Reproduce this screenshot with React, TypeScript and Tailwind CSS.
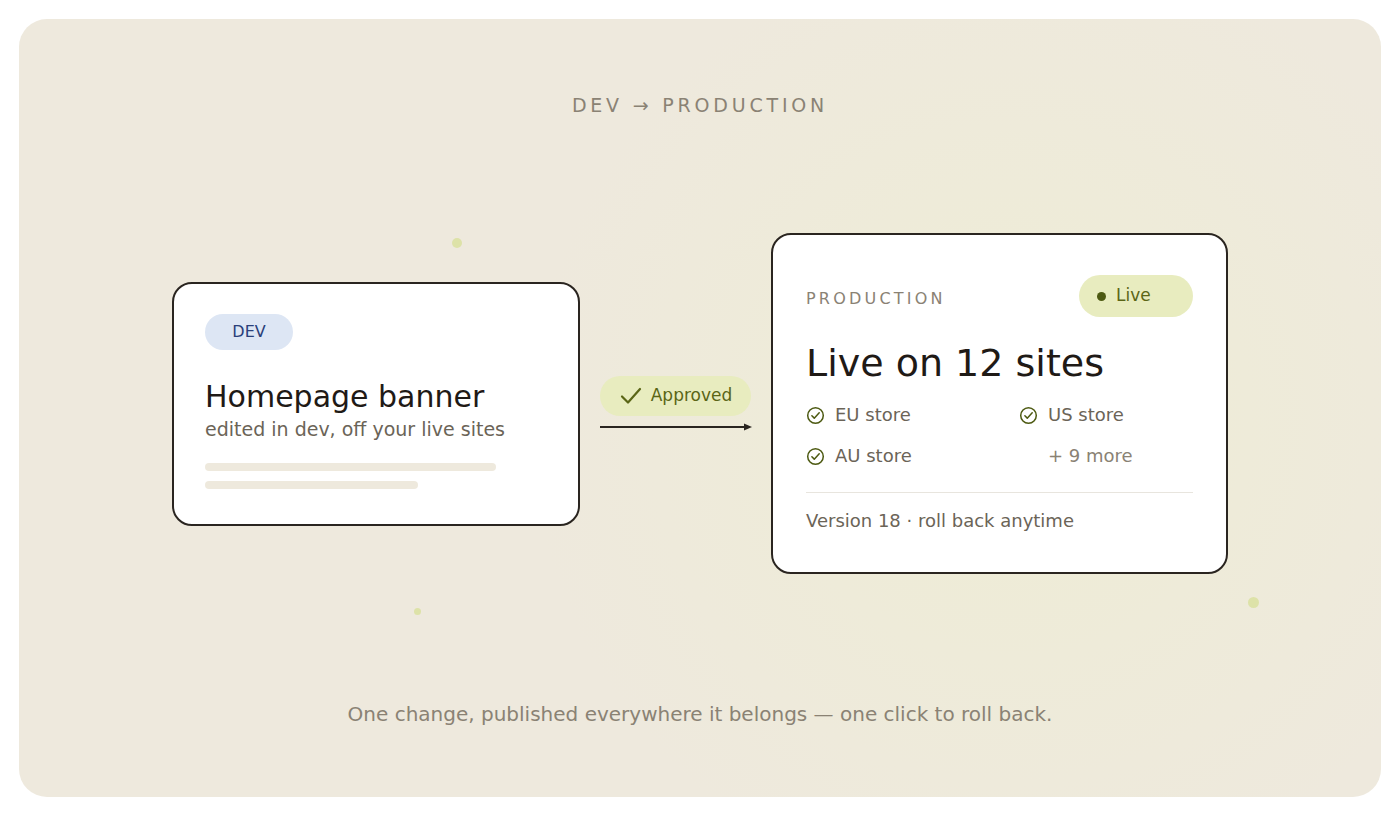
import React from 'react';

const Check = ({ className }: { className?: string }) => (
  <svg viewBox="0 0 20 20" className={className} fill="none" stroke="currentColor" strokeWidth="1.6" strokeLinecap="round" strokeLinejoin="round">
    <circle cx="10" cy="10" r="8.2" />
    <path d="M6.2 10.3l2.5 2.5 5.2-5.6" />
  </svg>
);

const stores = [
  { label: 'EU store', check: true },
  { label: 'US store', check: true },
  { label: 'AU store', check: true },
  { label: '+ 9 more', check: false },
];

export default function App() {
  return (
    <div className="w-[1400px] h-[817px] bg-white p-[19px]" style={{ fontFamily: '"DejaVu Sans", Verdana, sans-serif' }}>
      <div className="relative h-[778px] rounded-[28px] bg-[#eee9dd] bg-[radial-gradient(circle_at_73%_52%,#eeecd4_0%,#eeebd9_22%,#eee9dd_45%)] flex flex-col items-center overflow-hidden">
        {/* decorative dots */}
        <div className="absolute left-[433px] top-[219px] w-[10px] h-[10px] rounded-full bg-[#dde2a8]" />
        <div className="absolute left-[395px] top-[589px] w-[7px] h-[7px] rounded-full bg-[#dde2a8]" />
        <div className="absolute left-[1229px] top-[578px] w-[11px] h-[11px] rounded-full bg-[#dde2a8]" />

        <div className="mt-[74px] text-[19px] leading-6 tracking-[0.2em] text-[#8a8274]">DEV → PRODUCTION</div>

        <div className="flex-1 flex items-center pb-[12px]">
          {/* dev card */}
          <div className="w-[408px] h-[244px] bg-white border-2 border-[#2a2520] rounded-[20px] px-[31px] pt-[30px]">
            <div className="inline-flex items-center justify-center w-[88px] h-[36px] rounded-full bg-[#dde6f4] text-[#2a3f7a] text-[16px]">DEV</div>
            <div className="mt-[29px] text-[30px] leading-[36px] text-[#1f1a16]">Homepage banner</div>
            <div className="mt-[2px] text-[19px] leading-6 text-[#6b6457]">edited in dev, off your live sites</div>
            <div className="mt-[22px] w-[291px] h-[8px] rounded-full bg-[#eee9dd]" />
            <div className="mt-[10px] w-[213px] h-[8px] rounded-full bg-[#eee9dd]" />
          </div>

          {/* connector */}
          <div className="w-[191px] flex flex-col items-center">
            <div className="flex items-center gap-[8px] h-[40px] px-[19px] rounded-full bg-[#e8ecbf] text-[#5a6516] text-[17px]">
              <svg viewBox="0 0 24 24" className="w-[24px] h-[24px]" fill="none" stroke="currentColor" strokeWidth="2.2" strokeLinecap="round" strokeLinejoin="round">
                <path d="M3 12.5l6 6L21 5" />
              </svg>
              Approved
            </div>
            <svg width="154" height="10" viewBox="0 0 154 10" className="mt-[6px] ml-[2px]">
              <line x1="0" y1="5" x2="146" y2="5" stroke="#2a2520" strokeWidth="2" />
              <path d="M144 1.5L152 5L144 8.5Z" fill="#2a2520" />
            </svg>
          </div>

          {/* production card */}
          <div className="w-[457px] h-[341px] bg-white border-2 border-[#2a2520] rounded-[20px] px-[33px] pt-[46px]">
            <div className="flex items-center justify-between">
              <div className="text-[16px] tracking-[0.2em] text-[#8a8274]">PRODUCTION</div>
              <div className="-mt-[6px] flex items-center gap-[10px] w-[114px] h-[42px] pl-[18px] rounded-full bg-[#e8ecbf] text-[#5a6516] text-[17px]">
                <span className="w-[9px] h-[9px] rounded-full bg-[#4d5a12]" />
                Live
              </div>
            </div>
            <div className="mt-[24px] text-[38px] leading-[44px] text-[#1f1a16]">Live on 12 sites</div>
            <div className="mt-[18px] grid grid-cols-[213px_1fr] gap-y-[17px]">
              {stores.map((s) => (
                <div key={s.label} className="flex items-center gap-[10px] text-[18px] leading-6 text-[#6b6457]">
                  {s.check ? <Check className="w-[19px] h-[19px] text-[#4d5a12]" /> : <span className="w-[19px]" />}
                  <span className={s.check ? '' : 'text-[#8a8274]'}>{s.label}</span>
                </div>
              ))}
            </div>
            <div className="mt-[24px] h-px bg-[#e8e5de]" />
            <div className="mt-[16px] text-[18px] leading-6 text-[#6b6457]">Version 18 · roll back anytime</div>
          </div>
        </div>

        <div className="mb-[71px] text-[20px] leading-6 text-[#8a8274]">One change, published everywhere it belongs — one click to roll back.</div>
      </div>
    </div>
  );
}
